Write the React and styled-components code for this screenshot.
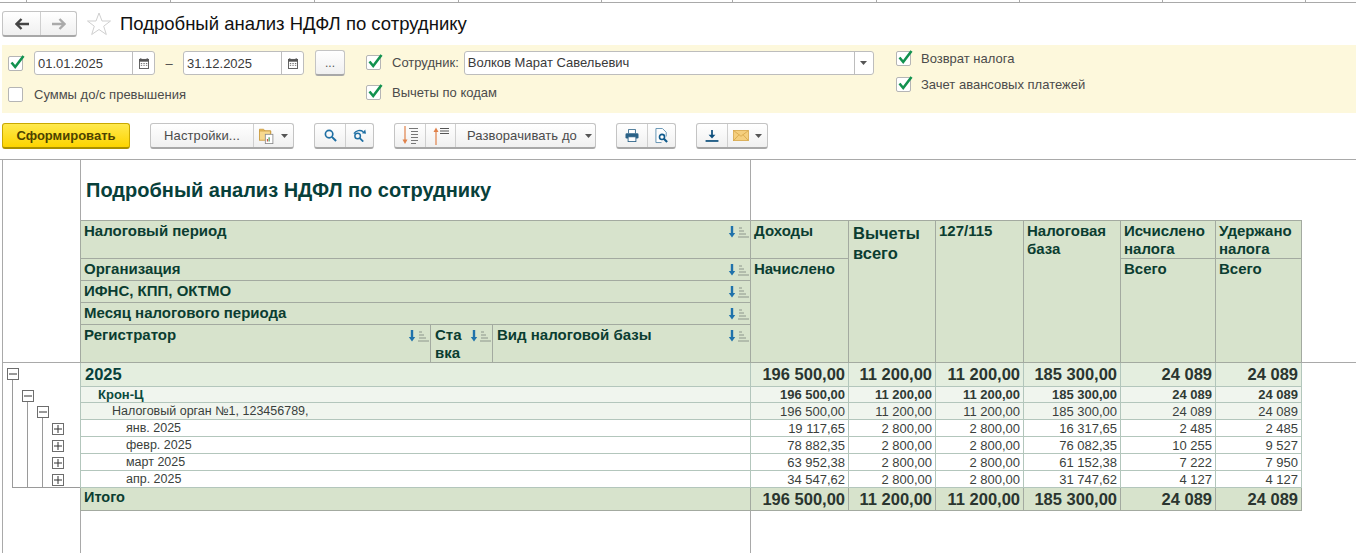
import React from "react";
import styled, { createGlobalStyle } from "styled-components";

const GlobalStyle = createGlobalStyle`
  html, body {
    margin: 0;
    padding: 0;
    height: 553px;
    overflow: hidden;
    background: #fff;
    font-family: "Liberation Sans", Arial, sans-serif;
  }
`;

const Page = styled.div`
  width: 1356px;
  height: 553px;
  overflow: hidden;
`;

const TabStrip = styled.div`
  display: flex;
  height: 2px;
  border-bottom: 1px solid #a9a9a9;
`;

const TabTick = styled.div`
  width: ${(p) => p.$w}px;
  flex: none;
  border-right: 1px solid #a9a9a9;
  box-sizing: border-box;
`;

const TitleBar = styled.div`
  display: flex;
  align-items: center;
  height: 42px;
  padding-left: 2px;
`;

const ButtonGroup = styled.div`
  display: flex;
  height: 26px;
  box-sizing: border-box;
  border: 1px solid #c4c4c4;
  border-bottom: 2px solid #a8a8a8;
  border-radius: 3px;
  background: linear-gradient(#ffffff, #f0f0f0);
  flex: none;
`;

const GroupButton = styled.div`
  display: flex;
  align-items: center;
  justify-content: ${(p) => p.$justify || "center"};
  gap: ${(p) => p.$gap ?? 6}px;
  width: ${(p) => p.$w}px;
  box-sizing: border-box;
  padding: ${(p) => p.$pad || "0"};
  font-size: 13px;
  letter-spacing: 0.1px;
  color: #4b4b4b;
  white-space: nowrap;
  & + & {
    border-left: 1px solid #cfcfcf;
  }
`;

const StarWrap = styled.div`
  margin: 0 9px 0 10px;
  display: flex;
`;

const PageTitle = styled.h1`
  margin: 0;
  font-size: 18.5px;
  font-weight: 400;
  color: #111;
`;

const FilterPanel = styled.div`
  display: flex;
  margin-left: 2px;
  height: 68px;
  padding-left: 6px;
  background: #fdf8dc;
`;

const FilterColumn = styled.div`
  display: flex;
  flex-direction: column;
  width: ${(p) => p.$w}px;
  flex: none;
  padding-top: ${(p) => p.$top || 0}px;
  box-sizing: border-box;
`;

const FilterRow = styled.div`
  display: flex;
  align-items: center;
  height: ${(p) => p.$h}px;
`;

const CheckBox = styled.div`
  width: 15px;
  height: 15px;
  flex: none;
  box-sizing: border-box;
  border: 1px solid #b5b5b5;
  border-radius: 2px;
  background: #fff;
  position: relative;
  margin-right: ${(p) => p.$mr ?? 11}px;

  svg {
    position: absolute;
    left: 0;
    top: -4px;
  }
`;

const FieldLabel = styled.span`
  font-size: 13px;
  color: #4b4b4b;
  white-space: nowrap;
`;

const Field = styled.div`
  display: flex;
  align-items: center;
  width: ${(p) => p.$w}px;
  height: 24px;
  margin-left: ${(p) => p.$ml || 0}px;
  flex: none;
  box-sizing: border-box;
  border: 1px solid #bdbdbd;
  border-radius: 3px;
  background: #fff;
  font-size: 13px;
  color: #3a3a3a;
`;

const FieldText = styled.div`
  flex: 1;
  padding-left: 3px;
  white-space: nowrap;
`;

const FieldAddon = styled.div`
  display: flex;
  align-items: center;
  justify-content: center;
  width: ${(p) => p.$w}px;
  height: 100%;
  border-left: 1px solid #bdbdbd;
  flex: none;
`;

const Dash = styled.span`
  width: 28px;
  flex: none;
  text-align: center;
  font-size: 13px;
  color: #4b4b4b;
`;

const DotsButton = styled.div`
  width: 30px;
  height: 26px;
  margin-left: 11px;
  flex: none;
  box-sizing: border-box;
  display: flex;
  align-items: center;
  justify-content: center;
  border: 1px solid #c4c4c4;
  border-bottom: 2px solid #a8a8a8;
  border-radius: 3px;
  background: linear-gradient(#ffffff, #f0f0f0);
  font-size: 12px;
  color: #555;
`;

const Toolbar = styled.div`
  display: flex;
  align-items: center;
  height: 26px;
  margin: 10px 0 0 2px;
  gap: 20px;
`;

const PrimaryButton = styled.div`
  width: 128px;
  height: 26px;
  flex: none;
  box-sizing: border-box;
  display: flex;
  align-items: center;
  justify-content: center;
  border: 1px solid #c9a800;
  border-bottom: 2px solid #ab9000;
  border-radius: 3px;
  background: linear-gradient(#ffe94e, #fdd400);
  font-size: 13px;
  font-weight: 700;
  color: #4d4300;
`;

const Report = styled.div`
  display: flex;
  margin-top: 10px;
  height: 394px;
  border-top: 1px solid #a9a9a9;
  box-sizing: border-box;
`;

const Gutter = styled.div`
  width: 78px;
  margin-left: 2px;
  flex: none;
  box-sizing: border-box;
  border-left: 1px solid #a9a9a9;
`;

const GutterHead = styled.div`
  height: 203px;
  box-sizing: border-box;
  border-bottom: 1px solid #a9a9a9;
`;

const Sheet = styled.table`
  border-collapse: collapse;
  table-layout: fixed;
  width: 1276px;
  flex: none;
  align-self: flex-start;
`;

const TitleCell = styled.td`
  height: 60px;
  padding: 0 0 0 5px;
  border-left: 1px solid #a9a9a9;
  border-right: 1px solid #a9a9a9;
  font-size: 20px;
  font-weight: 700;
  color: #07403a;
  vertical-align: middle;
`;

const HeadCell = styled.td`
  padding: ${(p) => p.$top ?? 1}px 0 0 ${(p) => p.$left ?? 3}px;
  background: #d7e3cc;
  border: 1px solid #a3aaa0;
  font-size: ${(p) => p.$size || 15}px;
  line-height: ${(p) => p.$lh || 18}px;
  font-weight: 700;
  color: #0b3d31;
  vertical-align: top;
  overflow: hidden;
`;

const HeadInner = styled.div`
  display: flex;
  justify-content: space-between;
`;

const SortMark = styled.span`
  flex: none;
  display: flex;
  margin-top: 3px;
`;

const TailCell = styled.td`
  border-bottom: 1px solid #a9a9a9;
`;

const DataCell = styled.td`
  box-sizing: border-box;
  height: ${(p) => p.$h}px;
  padding: ${(p) => (p.$alignTop ? "2px" : "0")} 3px 0 ${(p) => p.$indent || 0}px;
  background: ${(p) => p.$bg};
  border: 1px solid ${(p) => p.$line};
  font-size: ${(p) => p.$size}px;
  font-weight: ${(p) => (p.$bold ? 700 : 400)};
  color: ${(p) => p.$color};
  text-align: ${(p) => (p.$num ? "right" : "left")};
  vertical-align: ${(p) => (p.$alignTop ? "top" : "middle")};
  white-space: nowrap;
  overflow: hidden;
  line-height: 1;
`;

const FillerCell = styled.td`
  height: 43px;
  padding: 0;
  border-left: 1px solid #a9a9a9;
  border-right: 1px solid #a9a9a9;
`;

const rowKinds = {
  year: { h: 24, size: 16.5, label: 16.5, bold: true, bg: "#e4eedf", line: "#b3c6bc", color: "#2a352f", labelColor: "#07403a" },
  org: { h: 16, size: 13, label: 13, bold: true, bg: "#f0f5ee", line: "#b3c6bc", color: "#2f3a34", labelColor: "#0b4a3d" },
  ifns: { h: 17, size: 13, label: 12.5, bold: false, bg: "#f0f5ee", line: "#b3c6bc", color: "#3a3f3c", labelColor: "#3a3f3c" },
  month: { h: 17, size: 13, label: 12.5, bold: false, bg: "#fff", line: "#b3c6bc", color: "#3a3f3c", labelColor: "#3a3f3c" },
  total: { h: 23, size: 16.5, label: 14.5, bold: true, bg: "#d7e3cc", line: "#a3aaa0", color: "#2a352f", labelColor: "#0b3d31" },
};

const rows = [
  { kind: "year", label: "2025", indent: 4, values: ["196 500,00", "11 200,00", "11 200,00", "185 300,00", "24 089", "24 089"] },
  { kind: "org", label: "Крон-Ц", indent: 17, values: ["196 500,00", "11 200,00", "11 200,00", "185 300,00", "24 089", "24 089"] },
  { kind: "ifns", label: "Налоговый орган №1, 123456789,", indent: 31, values: ["196 500,00", "11 200,00", "11 200,00", "185 300,00", "24 089", "24 089"] },
  { kind: "month", label: "янв. 2025", indent: 45, values: ["19 117,65", "2 800,00", "2 800,00", "16 317,65", "2 485", "2 485"] },
  { kind: "month", label: "февр. 2025", indent: 45, values: ["78 882,35", "2 800,00", "2 800,00", "76 082,35", "10 255", "9 527"] },
  { kind: "month", label: "март 2025", indent: 45, values: ["63 952,38", "2 800,00", "2 800,00", "61 152,38", "7 222", "7 950"] },
  { kind: "month", label: "апр. 2025", indent: 45, values: ["34 547,62", "2 800,00", "2 800,00", "31 747,62", "4 127", "4 127"] },
  { kind: "total", label: "Итого", indent: 3, values: ["196 500,00", "11 200,00", "11 200,00", "185 300,00", "24 089", "24 089"] },
];

const colWidths = [350, 62, 258, 98, 87, 88, 97, 95, 86, 55];
const tabTicks = [27, 144, 144, 144, 143, 131, 144, 143, 143, 143];

const Tick = () => (
  <svg width="17" height="18" viewBox="0 0 17 18">
    <path d="M2.500 9.500l3.700 4.500L14.500 3" fill="none" stroke="#12924f" strokeWidth="2.600" />
  </svg>
);

const Check = ({ on = true, mr }) => <CheckBox $mr={mr}>{on && <Tick />}</CheckBox>;

const Caret = () => (
  <svg width="7" height="4" viewBox="0 0 7 4">
    <path d="M0 0h7L3.500 4z" fill="#555" />
  </svg>
);

const CalendarIcon = () => (
  <svg width="10" height="11" viewBox="0 0 11 12">
    <rect x="0.500" y="1.500" width="10" height="10" fill="#fff" stroke="#555" />
    <rect x="0.500" y="1.500" width="10" height="2.500" fill="#555" />
    <path d="M2 0v2M9 0v2" stroke="#555" />
    <path d="M2 6h1.500M4.800 6h1.500M7.600 6h1.500M2 8h1.500M4.800 8h1.500M7.600 8h1.500" stroke="#666" />
  </svg>
);

const ArrowIcon = ({ dir, color }) => (
  <svg width="14" height="12" viewBox="0 0 14 12">
    <path
      d={dir === "left" ? "M6.500 1L1.500 6l5 5M2 6h12" : "M7.500 1l5 5-5 5M12 6H0"}
      fill="none"
      stroke={color}
      strokeWidth="2.400"
    />
  </svg>
);

const StarIcon = () => (
  <svg width="24" height="24" viewBox="0 0 24 24">
    <path
      d="M12 1l3 8h8.500l-6.800 5.200 2.600 8.300L12 17.500l-7.300 5 2.600-8.300L.5 9H9z"
      fill="#fff"
      stroke="#cfcfcf"
    />
  </svg>
);

const SortIcon = () => (
  <svg width="22" height="14" viewBox="0 0 22 14">
    <path d="M4 1v9" stroke="#1f72ab" strokeWidth="2.400" />
    <path d="M0.800 8h6.400L4 12.500z" fill="#1f72ab" />
    <path d="M11 3h3M11 6h5M11 9h7M10 12h11" stroke="#8d968c" />
  </svg>
);

const SearchIcon = () => (
  <svg width="13" height="13" viewBox="0 0 14 14">
    <circle cx="5.500" cy="5.500" r="4" fill="none" stroke="#1f6fa3" strokeWidth="1.800" />
    <path d="M8.500 8.500l4.500 4.500" stroke="#1f6fa3" strokeWidth="2.200" />
  </svg>
);

const SearchNextIcon = () => (
  <svg width="15" height="13" viewBox="0 0 16 14">
    <circle cx="6" cy="7.500" r="3" fill="none" stroke="#1f6fa3" strokeWidth="1.600" />
    <path d="M8.300 9.800l3.700 3.700" stroke="#1f6fa3" strokeWidth="2" />
    <path d="M2 5C4 1.500 9 .5 12 3" fill="none" stroke="#1f6fa3" strokeWidth="1.500" />
    <path d="M10.500 4.500L15 5l-.8-4.500z" fill="#1f6fa3" />
  </svg>
);

const LevelsDownIcon = () => (
  <svg width="16" height="19" viewBox="0 0 16 19">
    <path d="M3 0v15" stroke="#e0814a" strokeWidth="1.200" />
    <path d="M.5 13.500h5L3 18z" fill="#e0814a" />
    <path d="M7 2.500h9M9 5.500h7M9 8.500h7M9 11.500h7M9 14.500h7M9 17.500h5" stroke="#777" />
  </svg>
);

const LevelsUpIcon = () => (
  <svg width="16" height="18" viewBox="0 0 16 18">
    <path d="M3 3v15" stroke="#e0814a" strokeWidth="1.200" />
    <path d="M.5 5h5L3 .5z" fill="#e0814a" />
    <path d="M7 1.500h9M7 4h9M7 6.500h9" stroke="#555" />
  </svg>
);

const PrintIcon = () => (
  <svg width="14" height="13" viewBox="0 0 16 15">
    <path d="M4 5V.5h8V5" fill="#fff" stroke="#2b6287" />
    <rect x="0.500" y="5" width="15" height="6" rx="1.500" fill="#2b6287" />
    <rect x="3.500" y="9" width="9" height="5.500" fill="#fff" stroke="#2b6287" />
  </svg>
);

const PreviewIcon = () => (
  <svg width="14" height="16" viewBox="0 0 15 17">
    <path d="M1 .5h7l4 4V9M1 .5v15h6" fill="#fff" stroke="#5d8fb0" />
    <circle cx="7.500" cy="9.500" r="2.700" fill="#fff" stroke="#0f5a8c" strokeWidth="1.700" />
    <path d="M9.500 11.500l3.500 3.500" stroke="#0f5a8c" strokeWidth="2.200" />
  </svg>
);

const DownloadIcon = () => (
  <svg width="14" height="12" viewBox="0 0 15 14">
    <path d="M7.500 0v7" stroke="#0d4f7c" strokeWidth="2" />
    <path d="M3.500 5.500h8l-4 4.500z" fill="#0d4f7c" />
    <path d="M0 12.800h15" stroke="#0d4f7c" strokeWidth="2" />
  </svg>
);

const MailIcon = () => (
  <svg width="16" height="11" viewBox="0 0 20 14">
    <rect x="0.500" y="0.500" width="19" height="13" fill="#f5cf7e" stroke="#d5a547" />
    <path d="M1 1l9 7 9-7M1 13l6.500-7M19 13l-6.500-7" fill="none" stroke="#d5a547" />
  </svg>
);

const VariantIcon = () => (
  <svg width="16" height="16" viewBox="0 0 19 19">
    <path d="M.5 4V1.500h5L7 3.500h7V7" fill="#f0c56c" stroke="#c9983a" />
    <rect x="0.500" y="3.500" width="13" height="11" fill="#f7d98f" stroke="#c9983a" />
    <rect x="7.500" y="7.500" width="9" height="11" fill="#fff" stroke="#8a8a8a" />
    <path d="M10 16v-3" stroke="#d14a3a" strokeWidth="1.300" />
    <path d="M12 16v-5" stroke="#3c8c4c" strokeWidth="1.300" />
  </svg>
);

const ToggleBox = ({ x, y, open }) => (
  <g>
    <rect x={x + 0.5} y={y + 0.5} width="11" height="11" fill="#fff" stroke="#6d6d6d" />
    <path d={`M${x + 2} ${y + 6}h8`} stroke="#333" />
    {!open && <path d={`M${x + 6} ${y + 2}v8`} stroke="#333" />}
  </g>
);

const TreeSvg = styled.svg`
  display: block;
`;

const TreeOutline = () => (
  <TreeSvg width="77" height="130" viewBox="3 363 77 130">
    <path
      d="M12.500 380v107.500M27.500 400v87.500M42.500 417v70.500M12 487.500h68"
      fill="none"
      stroke="#9a9a9a"
    />
    <ToggleBox x={7} y={368} open />
    <ToggleBox x={22} y={390} open />
    <ToggleBox x={37} y={406} open />
    <ToggleBox x={52} y={423} />
    <ToggleBox x={52} y={440} />
    <ToggleBox x={52} y={457} />
    <ToggleBox x={52} y={474} />
  </TreeSvg>
);

const SortedHead = ({ colSpan, rowSpan, left, children }) => (
  <HeadCell colSpan={colSpan} rowSpan={rowSpan} $left={left}>
    <HeadInner>
      <span>{children}</span>
      <SortMark>
        <SortIcon />
      </SortMark>
    </HeadInner>
  </HeadCell>
);

function ReportRow({ row }) {
  const kind = rowKinds[row.kind];
  const shared = {
    $h: kind.h,
    $bold: kind.bold,
    $bg: kind.bg,
    $line: kind.line,
  };
  return (
    <tr>
      <DataCell
        colSpan={3}
        {...shared}
        $color={kind.labelColor}
        $indent={row.indent}
        $size={kind.label}
        $alignTop={row.kind === "total"}
      >
        {row.label}
      </DataCell>
      {row.values.map((value, i) => (
        <DataCell key={i} {...shared} $num $size={kind.size} $color={kind.color}>
          {value}
        </DataCell>
      ))}
      <td />
    </tr>
  );
}

export default function App() {
  return (
    <Page>
      <GlobalStyle />
      <TabStrip>
        {tabTicks.map((w, i) => (
          <TabTick key={i} $w={w} />
        ))}
      </TabStrip>

      <TitleBar>
        <ButtonGroup>
          <GroupButton $w={37}>
            <ArrowIcon dir="left" color="#444" />
          </GroupButton>
          <GroupButton $w={36}>
            <ArrowIcon dir="right" color="#aaa" />
          </GroupButton>
        </ButtonGroup>
        <StarWrap>
          <StarIcon />
        </StarWrap>
        <PageTitle>Подробный анализ НДФЛ по сотруднику</PageTitle>
      </TitleBar>

      <FilterPanel>
        <FilterColumn $w={358} $top={5}>
          <FilterRow $h={26}>
            <Check />
            <Field $w={121}>
              <FieldText>01.01.2025</FieldText>
              <FieldAddon $w={21}>
                <CalendarIcon />
              </FieldAddon>
            </Field>
            <Dash>–</Dash>
            <Field $w={121}>
              <FieldText>31.12.2025</FieldText>
              <FieldAddon $w={21}>
                <CalendarIcon />
              </FieldAddon>
            </Field>
            <DotsButton>...</DotsButton>
          </FilterRow>
          <FilterRow $h={37}>
            <Check on={false} />
            <FieldLabel>Суммы до/с превышения</FieldLabel>
          </FilterRow>
        </FilterColumn>
        <FilterColumn $w={530} $top={5}>
          <FilterRow $h={25}>
            <Check />
            <FieldLabel>Сотрудник:</FieldLabel>
            <Field $w={410} $ml={5}>
              <FieldText>Волков Марат Савельевич</FieldText>
              <FieldAddon $w={18}>
                <Caret />
              </FieldAddon>
            </Field>
          </FilterRow>
          <FilterRow $h={35}>
            <Check />
            <FieldLabel>Вычеты по кодам</FieldLabel>
          </FilterRow>
        </FilterColumn>
        <FilterColumn $w={300}>
          <FilterRow $h={26}>
            <Check mr={10} />
            <FieldLabel>Возврат налога</FieldLabel>
          </FilterRow>
          <FilterRow $h={27}>
            <Check mr={10} />
            <FieldLabel>Зачет авансовых платежей</FieldLabel>
          </FilterRow>
        </FilterColumn>
      </FilterPanel>

      <Toolbar>
        <PrimaryButton>Сформировать</PrimaryButton>
        <ButtonGroup>
          <GroupButton $w={102}>Настройки...</GroupButton>
          <GroupButton $w={40}>
            <VariantIcon />
            <Caret />
          </GroupButton>
        </ButtonGroup>
        <ButtonGroup>
          <GroupButton $w={30}>
            <SearchIcon />
          </GroupButton>
          <GroupButton $w={28}>
            <SearchNextIcon />
          </GroupButton>
        </ButtonGroup>
        <ButtonGroup>
          <GroupButton $w={30}>
            <LevelsDownIcon />
          </GroupButton>
          <GroupButton $w={30}>
            <LevelsUpIcon />
          </GroupButton>
          <GroupButton $w={140} $justify="flex-start" $pad="0 0 0 11px" $gap={8}>
            Разворачивать до
            <Caret />
          </GroupButton>
        </ButtonGroup>
        <ButtonGroup>
          <GroupButton $w={30}>
            <PrintIcon />
          </GroupButton>
          <GroupButton $w={28}>
            <PreviewIcon />
          </GroupButton>
        </ButtonGroup>
        <ButtonGroup>
          <GroupButton $w={30}>
            <DownloadIcon />
          </GroupButton>
          <GroupButton $w={40}>
            <MailIcon />
            <Caret />
          </GroupButton>
        </ButtonGroup>
      </Toolbar>

      <Report>
        <Gutter>
          <GutterHead />
          <TreeOutline />
        </Gutter>
        <Sheet>
          <colgroup>
            {colWidths.map((w, i) => (
              <col key={i} style={{ width: w }} />
            ))}
          </colgroup>
          <tbody>
            <tr>
              <TitleCell colSpan={3}>Подробный анализ НДФЛ по сотруднику</TitleCell>
              <td colSpan={7} />
            </tr>
            <tr style={{ height: 38 }}>
              <SortedHead colSpan={3}>Налоговый период</SortedHead>
              <HeadCell>Доходы</HeadCell>
              <HeadCell rowSpan={5} $size={16.5} $lh={20} $top={2} $left={4}>
                Вычеты всего
              </HeadCell>
              <HeadCell rowSpan={5}>127/115</HeadCell>
              <HeadCell rowSpan={5}>Налоговая база</HeadCell>
              <HeadCell>Исчислено налога</HeadCell>
              <HeadCell>Удержано налога</HeadCell>
              <TailCell rowSpan={5} />
            </tr>
            <tr style={{ height: 22 }}>
              <SortedHead colSpan={3}>Организация</SortedHead>
              <HeadCell rowSpan={4}>Начислено</HeadCell>
              <HeadCell rowSpan={4}>Всего</HeadCell>
              <HeadCell rowSpan={4}>Всего</HeadCell>
            </tr>
            <tr style={{ height: 22 }}>
              <SortedHead colSpan={3}>ИФНС, КПП, ОКТМО</SortedHead>
            </tr>
            <tr style={{ height: 22 }}>
              <SortedHead colSpan={3}>Месяц налогового периода</SortedHead>
            </tr>
            <tr style={{ height: 38 }}>
              <SortedHead>Регистратор</SortedHead>
              <SortedHead left={4}>
                Ста
                <br />
                вка
              </SortedHead>
              <SortedHead left={4}>Вид налоговой базы</SortedHead>
            </tr>
            {rows.map((row) => (
              <ReportRow key={row.label} row={row} />
            ))}
            <tr>
              <FillerCell colSpan={3} />
              <td colSpan={7} />
            </tr>
          </tbody>
        </Sheet>
      </Report>
    </Page>
  );
}
